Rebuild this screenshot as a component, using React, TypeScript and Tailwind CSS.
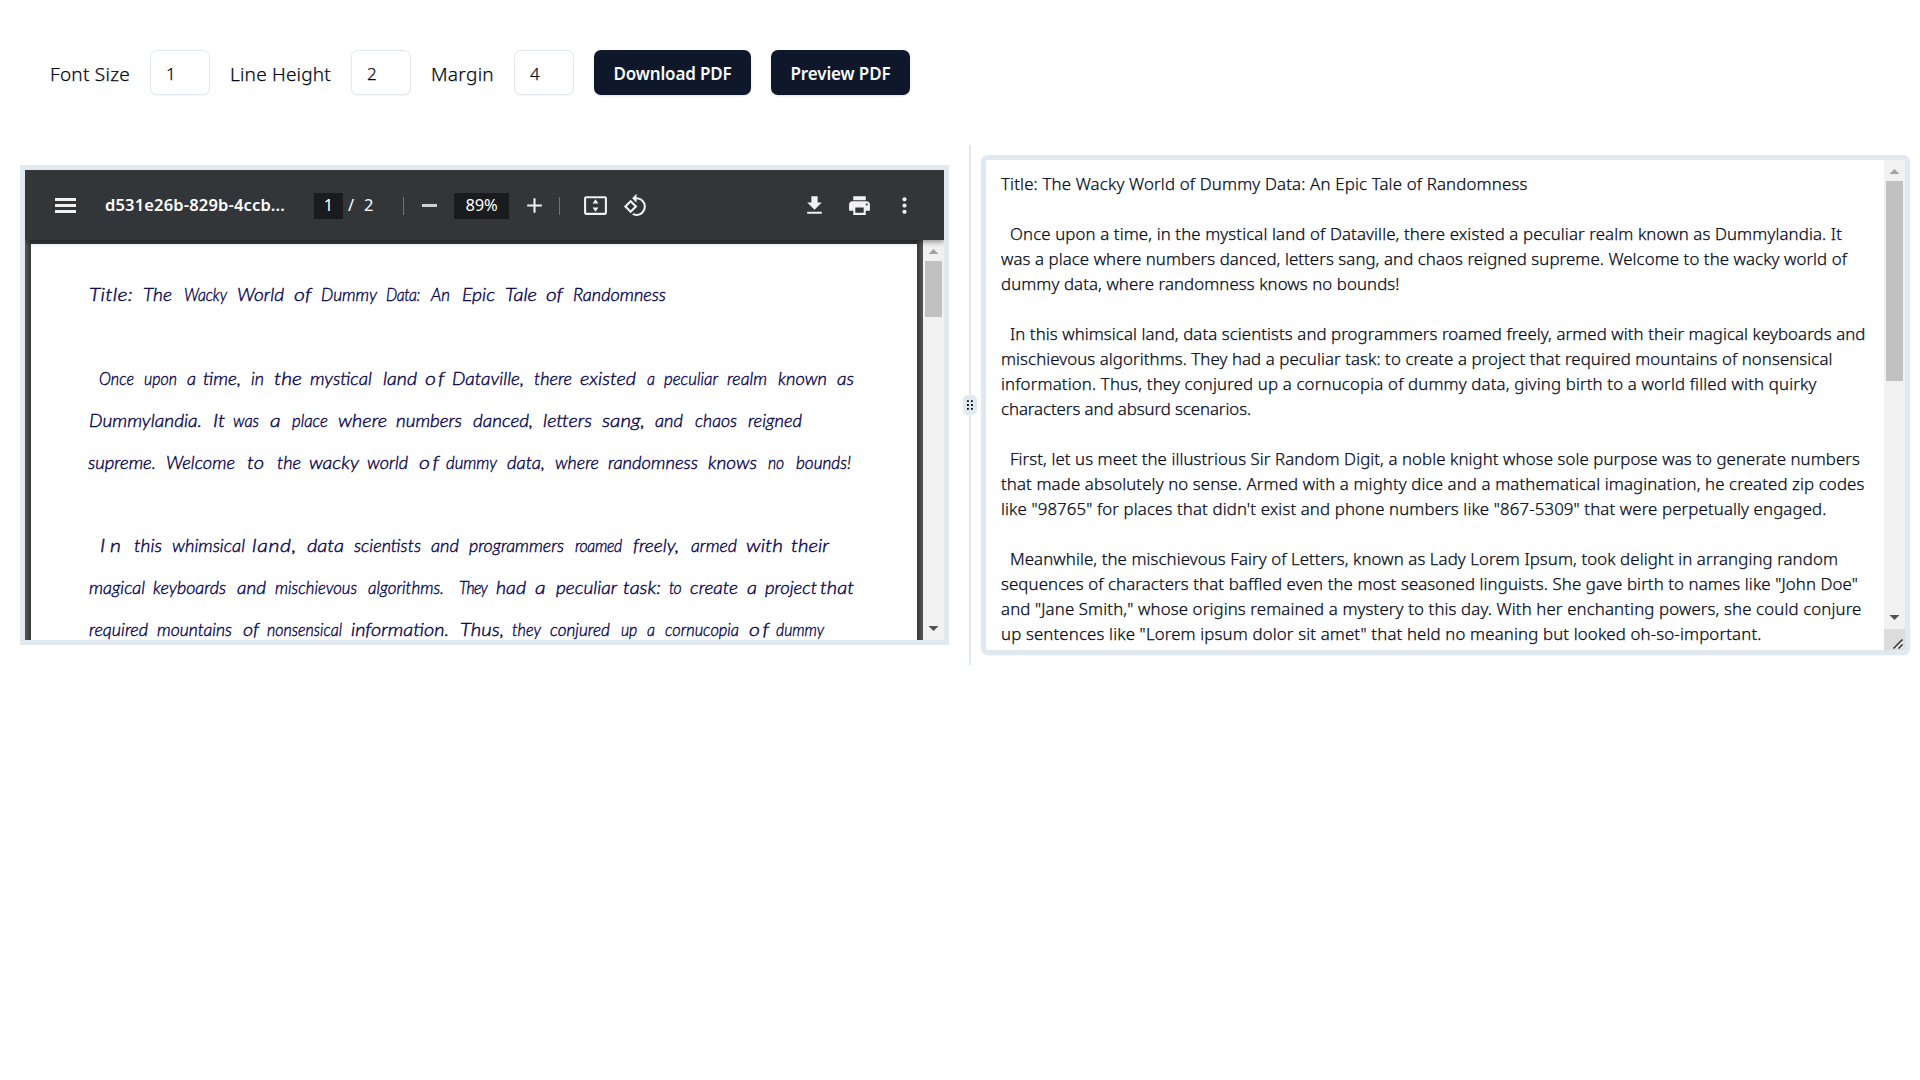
import { useLayoutEffect, useRef, type ReactNode } from "react";

/* Text that fills an exact width by letter spacing, after an optional slight stretch of the glyphs. */
function Fit({ text, width, className = "", stretch = false }: { text: string; width: number; className?: string; stretch?: boolean }) {
  const ref = useRef<HTMLSpanElement>(null);
  useLayoutEffect(() => {
    const el = ref.current;
    if (!el) return;
    el.style.letterSpacing = "0px";
    el.style.transform = "none";
    const natural = el.getBoundingClientRect().width;
    const scale = stretch ? Math.min(1.18, Math.max(0.88, width / natural)) : 1;
    el.style.letterSpacing = `${(width / scale - natural) / text.length}px`;
    if (stretch) el.style.transform = `scaleX(${scale})`;
  }, [text, width, stretch]);
  return (
    <span className={`block shrink-0 whitespace-pre ${className}`} style={{ width }}>
      <span ref={ref} className="inline-block origin-left whitespace-pre">{text}</span>
    </span>
  );
}

type Word = [string, number, number];

const handwriting: { gap: boolean; words: Word[] }[] = [
  { gap: false, words: [["Title:", 89, 133], ["The", 143, 172], ["Wacky", 184, 227], ["World", 237, 284], ["of", 294, 312], ["Dummy", 321, 377], ["Data:", 386, 420], ["An", 431, 450], ["Epic", 462, 495], ["Tale", 505, 537], ["of", 546, 563], ["Randomness", 573, 666]] },
  { gap: true, words: [["Once", 99, 134], ["upon", 144, 177], ["a", 187, 196], ["time,", 203, 241], ["in", 251, 264], ["the", 274, 302], ["mystical", 310, 372], ["land", 383, 417], ["of", 425, 447], ["Dataville,", 452, 524], ["there", 534, 572], ["existed", 580, 636], ["a", 647, 655], ["peculiar", 664, 718], ["realm", 727, 767], ["known", 778, 827], ["as", 837, 854]] },
  { gap: false, words: [["Dummylandia.", 89, 202], ["It", 213, 225], ["was", 233, 259], ["a", 270, 282], ["place", 292, 328], ["where", 338, 387], ["numbers", 396, 462], ["danced,", 473, 533], ["letters", 543, 592], ["sang,", 602, 645], ["and", 655, 683], ["chaos", 695, 737], ["reigned", 748, 802]] },
  { gap: false, words: [["supreme.", 88, 156], ["Welcome", 166, 235], ["to", 247, 264], ["the", 277, 301], ["wacky", 309, 359], ["world", 367, 408], ["of", 419, 442], ["dummy", 446, 497], ["data,", 507, 545], ["where", 555, 599], ["randomness", 608, 698], ["knows", 708, 757], ["no", 768, 784], ["bounds!", 796, 851]] },
  { gap: true, words: [["In", 100, 126], ["this", 134, 162], ["whimsical", 172, 245], ["land,", 252, 297], ["data", 307, 344], ["scientists", 354, 421], ["and", 431, 459], ["programmers", 469, 564], ["roamed", 575, 622], ["freely,", 633, 679], ["armed", 691, 737], ["with", 746, 783], ["their", 791, 829]] },
  { gap: false, words: [["magical", 89, 145], ["keyboards", 153, 226], ["and", 237, 266], ["mischievous", 275, 357], ["algorithms.", 368, 444], ["They", 459, 487], ["had", 496, 526], ["a", 535, 547], ["peculiar", 556, 617], ["task:", 623, 661], ["to", 669, 681], ["create", 690, 738], ["a", 747, 757], ["project", 765, 817], ["that", 820, 854]] },
  { gap: false, words: [["required", 89, 148], ["mountains", 157, 232], ["of", 243, 259], ["nonsensical", 267, 342], ["information.", 351, 449], ["Thus,", 460, 504], ["they", 512, 541], ["conjured", 550, 610], ["up", 621, 637], ["a", 647, 655], ["cornucopia", 665, 739], ["of", 749, 772], ["dummy", 776, 824]] },
];

const source: [string, number][][] = [
  [["Title: The Wacky World of Dummy Data: An Epic Tale of Randomness", 526.5]],
  [
    ["Once upon a time, in the mystical land of Dataville, there existed a peculiar realm known as Dummylandia. It", 832],
    ["was a place where numbers danced, letters sang, and chaos reigned supreme. Welcome to the wacky world of", 846],
    ["dummy data, where randomness knows no bounds!", 398.5],
  ],
  [
    ["In this whimsical land, data scientists and programmers roamed freely, armed with their magical keyboards and", 855.5],
    ["mischievous algorithms. They had a peculiar task: to create a project that required mountains of nonsensical", 831.5],
    ["information. Thus, they conjured up a cornucopia of dummy data, giving birth to a world filled with quirky", 815.5],
    ["characters and absurd scenarios.", 250],
  ],
  [
    ["First, let us meet the illustrious Sir Random Digit, a noble knight whose sole purpose was to generate numbers", 850],
    ["that made absolutely no sense. Armed with a mighty dice and a mathematical imagination, he created zip codes", 863.5],
    ["like \"98765\" for places that didn't exist and phone numbers like \"867-5309\" that were perpetually engaged.", 825.5],
  ],
  [
    ["Meanwhile, the mischievous Fairy of Letters, known as Lady Lorem Ipsum, took delight in arranging random", 828],
    ["sequences of characters that baffled even the most seasoned linguists. She gave birth to names like \"John Doe\"", 857],
    ["and \"Jane Smith,\" whose origins remained a mystery to this day. With her enchanting powers, she could conjure", 860.5],
    ["up sentences like \"Lorem ipsum dolor sit amet\" that held no meaning but looked oh-so-important.", 760.5],
  ],
];

function HandLine({ words }: { words: Word[] }) {
  return (
    <div className="flex h-[41.8px] items-center">
      {words.map(([w, start, end], i) => (
        <div key={i} style={{ marginLeft: start - (i ? words[i - 1][2] : 31) }}>
          <Fit text={w} width={end - start} stretch />
        </div>
      ))}
    </div>
  );
}

function Field({ label, width, value }: { label: string; width: number; value: string }) {
  return (
    <>
      <Fit text={label} width={width} className="pt-0.5 text-[19px] leading-[30px] [-webkit-text-stroke:0.25px_#020817]" />
      <div className="flex h-[45px] w-[60px] shrink-0 items-center rounded-[7px] border border-slate-200 bg-white px-[15px] pt-0.5 text-[17px] shadow-xs [-webkit-text-stroke:0.25px_#020817]">
        {value}
      </div>
    </>
  );
}

function Button({ text, width, className }: { text: string; width: number; className: string }) {
  return (
    <button className={`flex h-[45px] shrink-0 items-center justify-center rounded-[7px] bg-slate-900 pt-0.5 text-[17px] font-semibold text-slate-50 shadow-sm ${className}`}>
      <Fit text={text} width={width} />
    </button>
  );
}

function Icon({ children, className = "" }: { children: ReactNode; className?: string }) {
  return (
    <svg viewBox="0 0 24 24" className={`size-[25px] shrink-0 fill-[#f1f1f1] ${className}`}>
      {children}
    </svg>
  );
}

function Arrow({ down = false }: { down?: boolean }) {
  return (
    <svg viewBox="0 0 21 21" className={`size-[21px] shrink-0 ${down ? "fill-[#505050]" : "fill-[#a3a3a3]"}`}>
      {down ? <path d="M5.5 7h10l-5 5z" /> : <path d="M5.5 14h10l-5-5z" />}
    </svg>
  );
}

export default function App() {
  return (
    <div className="h-[1080px] w-[1920px] overflow-hidden bg-white font-['Noto_Sans','Open_Sans',sans-serif] text-[#020817]">
      <div className="flex h-[145px] items-start pt-[50px] pl-[50px]">
        <div className="flex items-center gap-5 font-[350]">
          <Field label="Font Size" width={80} value="1" />
          <Field label="Line Height" width={101} value="2" />
          <Field label="Margin" width={63} value="4" />
          <Button text="Download PDF" width={118} className="w-[157px]" />
          <Button text="Preview PDF" width={100} className="w-[139px]" />
        </div>
      </div>

      <div className="flex h-[520px] items-stretch">
        <div className="w-[969px] pt-5 pl-5">
          <div className="flex h-[480px] w-[929px] flex-col overflow-hidden border-5 border-slate-200 bg-[#525659]">
            <header className="z-10 flex h-[70px] shrink-0 items-center bg-[#323639] pt-px text-[16.5px] text-white shadow-[0_2px_5px_rgba(0,0,0,0.4)]">
              <div className="ml-[30px] flex w-[21px] flex-col gap-[3px]">
                <i className="h-[3px] bg-[#f1f1f1]" />
                <i className="h-[3px] bg-[#f1f1f1]" />
                <i className="h-[3px] bg-[#f1f1f1]" />
              </div>
              <Fit text="d531e26b-829b-4ccb..." width={180} className="ml-[29px] font-semibold" />
              <span className="ml-[29px] flex h-[26px] w-[29px] items-center justify-center bg-[#191b1c]">1</span>
              <span className="ml-[5px] w-[16px]">/</span>
              <span className="w-[39px]">2</span>
              <i className="h-[18px] w-px bg-[#6f7274]" />
              <i className="ml-[18px] h-[3px] w-[15px] bg-[#d0d0d0]" />
              <span className="ml-[17px] flex h-[26px] w-[55px] items-center justify-center bg-[#191b1c]">
                <Fit text="89%" width={32} />
              </span>
              <Icon className="ml-[13px]"><path d="M19 13h-6v6h-2v-6H5v-2h6V5h2v6h6z" /></Icon>
              <i className="ml-[12px] h-[18px] w-px bg-[#6f7274]" />
              <Icon className="ml-[23px]">
                <path d="M21 3H3c-1.1 0-2 .9-2 2v14c0 1.1.9 2 2 2h18c1.1 0 2-.9 2-2V5c0-1.1-.9-2-2-2zm0 16.01H3V4.99h18v14.02zM12 6 9.2 10h5.6zM12 18l2.8-4H9.2z" />
              </Icon>
              <Icon className="ml-[15px]">
                <path d="M7.34 6.41.86 12.9l6.49 6.48 6.49-6.48-6.5-6.49zM3.69 12.9l3.66-3.66L11 12.9l-3.66 3.66-3.65-3.66zm15.67-6.26A8.95 8.95 0 0 0 13 4V.76L8.76 5 13 9.24V6c1.79 0 3.58.68 4.95 2.05a7.007 7.007 0 0 1 0 9.9 6.973 6.973 0 0 1-7.79 1.44l-1.49 1.49C10.02 21.62 11.51 22 13 22c2.3 0 4.61-.88 6.36-2.64a8.98 8.98 0 0 0 0-12.72z" />
              </Icon>
              <Icon className="ml-[154px]"><path d="M19 9h-4V3H9v6H5l7 7 7-7zM5 18v2h14v-2H5z" /></Icon>
              <Icon className="ml-5">
                <path d="M19 8H5c-1.66 0-3 1.34-3 3v6h4v4h12v-4h4v-6c0-1.66-1.34-3-3-3zm-3 11H8v-5h8v5zm3-7c-.55 0-1-.45-1-1s.45-1 1-1 1 .45 1 1-.45 1-1 1zm-1-9H6v4h12V3z" />
              </Icon>
              <Icon className="ml-5">
                <path d="M12 8c1.1 0 2-.9 2-2s-.9-2-2-2-2 .9-2 2 .9 2 2 2zm0 2c-1.1 0-2 .9-2 2s.9 2 2 2 2-.9 2-2-.9-2-2-2zm0 6c-1.1 0-2 .9-2 2s.9 2 2 2 2-.9 2-2-.9-2-2-2z" />
              </Icon>
            </header>

            <div className="flex h-[400px] shrink-0">
              <div className="flex w-[898px] bg-[linear-gradient(90deg,#525659_0px,#36393b_6px,#36393b_892px,#525659_898px)] px-1.5 pt-1">
                <div className="h-[396px] w-[886px] overflow-hidden bg-white pt-[30px] font-[Lato] text-[18px] font-light text-[#06044f] italic [-webkit-text-stroke:0.4px_#06044f]">
                  {handwriting.map((line, i) => (
                    <div key={i} className={line.gap ? "pt-[41.8px]" : ""}>
                      <HandLine words={line.words} />
                    </div>
                  ))}
                </div>
              </div>
              <div className="flex w-[21px] flex-col justify-between bg-[#f1f1f1]">
                <div>
                  <Arrow />
                  <div className="mx-auto h-14 w-[17px] bg-[#c1c1c1]" />
                </div>
                <Arrow down />
              </div>
            </div>
          </div>
        </div>

        <div className="flex w-0.5 items-center justify-center bg-slate-200">
          <div className="z-10 flex h-5 w-3.5 shrink-0 items-center justify-center rounded-[5px] bg-slate-200">
            <svg viewBox="0 0 6 10" className="h-2.5 w-1.5 fill-[#020817]">
              <path d="M0 .3h1.8v1.8H0zM4 .3h1.8v1.8H4zM0 4.1h1.8v1.8H0zM4 4.1h1.8v1.8H4zM0 7.9h1.8v1.8H0zM4 7.9h1.8v1.8H4z" />
            </svg>
          </div>
        </div>

        <div className="pt-2.5 pl-2.5">
          <div className="flex h-[500px] w-[929px] overflow-hidden rounded-[7px] border-5 border-slate-200 bg-white shadow-xs">
            <div className="flex w-[898px] flex-col gap-[25px] pt-[11px] pl-[15px] text-[16.8px] leading-[25px] font-[350] [-webkit-text-stroke:0.25px_#020817]">
              {source.map((lines, p) => (
                <div key={p}>
                  {lines.map(([text, width], i) => (
                    <div key={i} className={p > 0 && i === 0 ? "pl-[9px]" : ""}>
                      <Fit text={text} width={width} />
                    </div>
                  ))}
                </div>
              ))}
            </div>
            <div className="flex w-[21px] flex-col bg-[#f1f1f1]">
              <Arrow />
              <div className="mx-auto h-[200px] w-[17px] bg-[#c1c1c1]" />
              <div className="grow" />
              <Arrow down />
              <svg viewBox="0 0 21 21" className="size-[21px] shrink-0 bg-[#dcdcdc]">
                <path d="M9.5 19.5 18.5 10.5M14.5 19.5l4-4" className="fill-none stroke-[#404040] stroke-[1.7]" />
                <path d="M11.5 19.5l7-7M17 19.5l2-2" className="fill-none stroke-white stroke-1" />
              </svg>
            </div>
          </div>
        </div>
      </div>
    </div>
  );
}
